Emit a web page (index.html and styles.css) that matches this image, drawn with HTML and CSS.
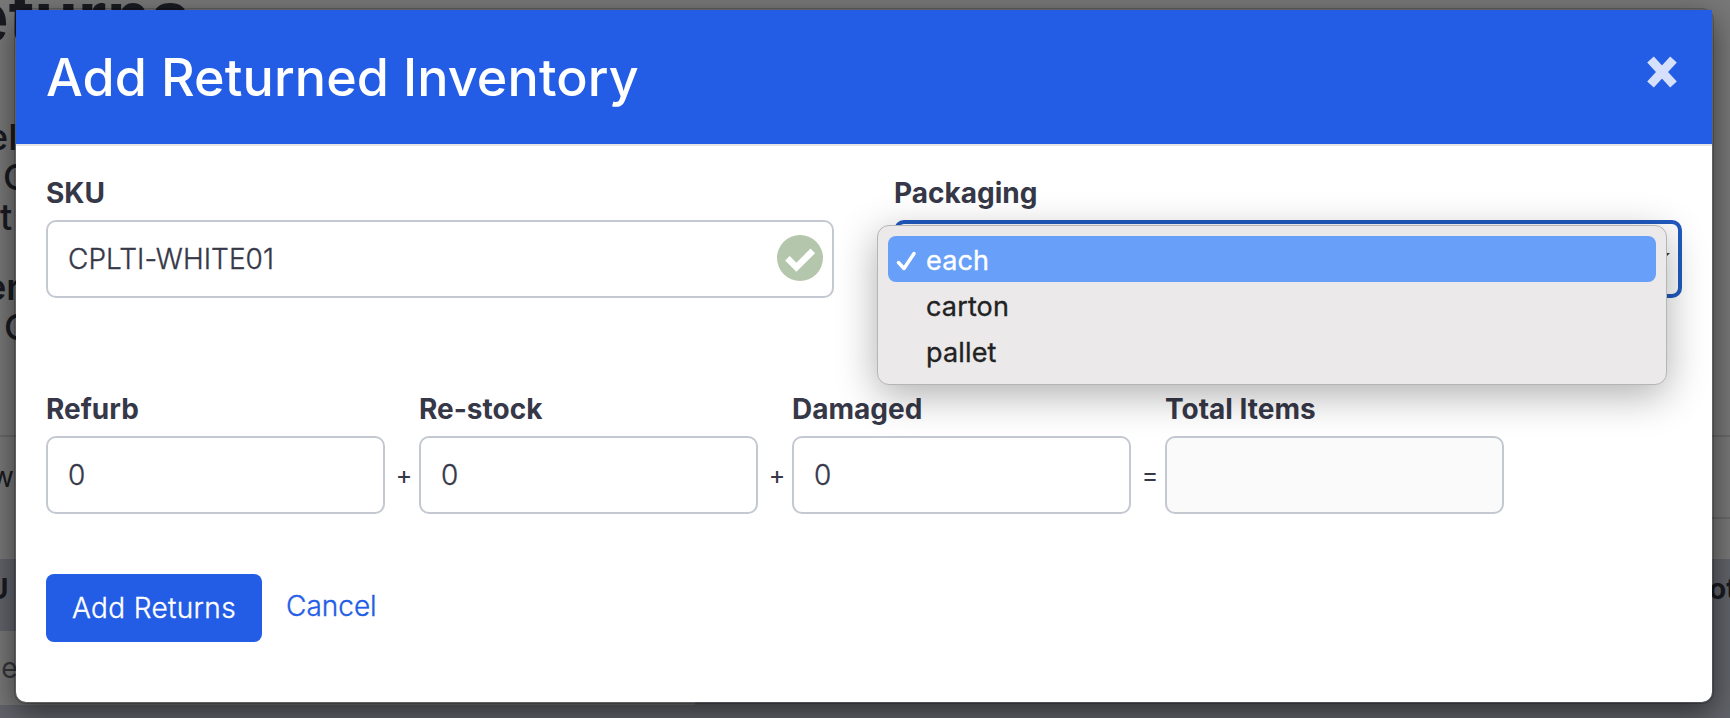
FILE: index.html
```
<!DOCTYPE html>
<html lang="en">

<head>
  <meta charset="UTF-8">
  <meta name="viewport" content="width=device-width, initial-scale=1.0">
  <title>Add Returned Inventory</title>
  <link rel="stylesheet" href="styles.css">
</head>

<body>

  <!-- page behind the modal -->
  <div class="page">
    <h1 class="page-title">eturns</h1>
    <div class="details">
      <p class="line-el">el</p>
      <p class="line-c">C</p>
      <p class="line-t">t</p>
      <p class="line-er">er</p>
      <p class="line-c2">C</p>
    </div>
    <div class="filters"><span>w</span><i></i></div>
    <div class="table-head"><span class="head-left">U</span><span class="head-right">ot</span></div>
    <div class="table-row"><span>be</span></div>
    <div class="tabs"></div>
  </div>

  <div class="modal">
    <div class="modal-header">
      <h2>Add Returned Inventory</h2>
      <button class="close" type="button" aria-label="Close">
        <svg width="32" height="34" viewBox="0 0 32 34">
          <path d="M4.5 4.5L27.5 29.5M27.5 4.5L4.5 29.5" />
        </svg>
      </button>
    </div>

    <form class="modal-body">
      <div class="row">
        <div class="field">
          <label>SKU</label>
          <div class="input">
            <span>CPLTI-WHITE01</span>
            <svg class="valid" width="46" height="46" viewBox="0 0 46 46">
              <circle cx="23" cy="23" r="23" />
              <path d="M10.4 23.2L19.4 32.2L35.8 15.9" />
            </svg>
          </div>
        </div>
        <div class="field">
          <label>Packaging</label>
          <div class="input select">
            <i class="caret"></i>
            <ul class="menu">
              <li class="active">
                <svg width="20" height="20" viewBox="0 0 20 20">
                  <path d="M2.5 11.5L8 17.5L18 2.5" />
                </svg>
                each
              </li>
              <li>carton</li>
              <li>pallet</li>
            </ul>
          </div>
        </div>
      </div>

      <div class="row counts">
        <div class="field">
          <label>Refurb</label>
          <div class="input">0</div>
        </div>
        <span class="sign">+</span>
        <div class="field">
          <label>Re-stock</label>
          <div class="input">0</div>
        </div>
        <span class="sign">+</span>
        <div class="field">
          <label>Damaged</label>
          <div class="input">0</div>
        </div>
        <span class="sign">=</span>
        <div class="field">
          <label>Total Items</label>
          <div class="input disabled"></div>
        </div>
      </div>

      <div class="actions">
        <button class="btn" type="button">Add Returns</button>
        <a class="cancel">Cancel</a>
      </div>
    </form>
  </div>

</body>

</html>
```
FILE: styles.css
```
* {
  margin: 0;
  padding: 0;
  box-sizing: border-box;
}

body {
  width: 1730px;
  height: 718px;
  overflow: hidden;
  position: relative;
  font-family: Inter, "Liberation Sans", sans-serif;
  font-size: 28px;
  color: #363848;
}

ul {
  list-style: none;
}

/* page behind the modal */
.page {
  height: 718px;
  overflow: hidden;
  background-color: #777877;
  color: #191b21;
  white-space: nowrap;
}

.page-title {
  height: 117px;
  margin-left: -33px;
  font-size: 70px;
  font-weight: 700;
  line-height: 34px;
}

.details {
  height: 318px;
  font-size: 36px;
  font-weight: 500;
  line-height: 40px;
}

.line-el {
  margin-left: -13px;
}

.line-c {
  margin-left: 3px;
}

.line-er {
  margin: 30px 0 0 -15px;
  font-weight: 600;
}

.line-c2 {
  margin-left: 4px;
}

.filters {
  height: 124px;
  display: flex;
  border-top: 2px solid #686968;
}

.filters span {
  width: 28px;
  height: 81px;
  margin-left: -9px;
  line-height: 81px;
}

.filters i {
  flex: 1;
  height: 82px;
  border-bottom: 2px solid #686968;
}

.table-head {
  height: 72px;
  display: flex;
  justify-content: space-between;
  background-color: #62646b;
  font-weight: 700;
  line-height: 60px;
}

.head-left {
  margin-left: -12px;
}

.head-right {
  width: 21px;
}

.table-row {
  height: 74px;
  background: linear-gradient(to right, #777877 695px, #62646b 695px);
  color: #34353a;
  line-height: 74px;
}

.table-row span {
  margin-left: -16px;
}

.tabs {
  height: 13px;
  background-color: #62646b;
}

/* modal */
.modal {
  position: absolute;
  left: 14px;
  top: 8px;
  width: 1700px;
  height: 696px;
  border: 2px solid rgba(0, 0, 0, .2);
  border-radius: 12px;
  background-color: #fff;
  background-clip: padding-box;
  box-shadow: 0 10px 30px rgba(0, 0, 0, .5);
}

.modal-header {
  height: 136px;
  padding: 0 34px 0 30px;
  display: flex;
  justify-content: space-between;
  border-bottom: 2px solid #e5e5e5;
  background-color: #235de6;
}

.modal-header h2 {
  color: #fff;
  font-size: 52px;
  font-weight: 500;
  letter-spacing: .1px;
  line-height: 136px;
}

.close {
  height: 34px;
  margin-top: 45px;
  border: 0;
  background: none;
}

.close svg,
.valid {
  display: block;
}

.close path {
  fill: none;
  stroke: #d6e0fa;
  stroke-width: 9;
}

.modal-body {
  padding: 28px 30px 0;
}

.row {
  height: 216px;
  display: flex;
  gap: 60px;
}

.field {
  width: 788px;
}

label {
  display: block;
  height: 46px;
  font-weight: 700;
  letter-spacing: 0;
  line-height: 39px;
}

.input {
  height: 78px;
  padding: 0 9px 0 20px;
  display: flex;
  align-items: center;
  justify-content: space-between;
  border: 2px solid #c4c8d0;
  border-radius: 10px;
  background-color: #fff;
  font-weight: 300;
  letter-spacing: .05px;
  -webkit-text-stroke: .35px;
}

.valid {
  margin-top: -2px;
}

.valid circle {
  fill: #b4c6ab;
}

.valid path {
  fill: none;
  stroke: #fff;
  stroke-width: 6.5;
}

.select {
  position: relative;
  border: 4px solid #205bc0;
}

.caret {
  position: absolute;
  right: 8px;
  top: 29px;
  border: 7px solid transparent;
  border-top-color: #333;
}

/* dropdown lies over the select */
.menu {
  position: absolute;
  left: -21px;
  top: 1px;
  width: 790px;
  height: 160px;
  padding: 10px;
  border: 1px solid #b5b4b6;
  border-radius: 12px;
  background-color: #ebe9ea;
  box-shadow: 0 10px 40px rgba(0, 0, 0, .32);
  color: #222;
  font-weight: 400;
  font-size: 27px;
  letter-spacing: .15px;
}

.menu li {
  height: 46px;
  padding-left: 38px;
  border-radius: 8px;
  line-height: 49px;
}

.menu .active {
  position: relative;
  background-color: #679ff9;
  color: #fff;
}

.menu svg {
  position: absolute;
  left: 8px;
  top: 15px;
}

.menu path {
  fill: none;
  stroke: #fff;
  stroke-width: 3.5;
  stroke-linecap: round;
  stroke-linejoin: round;
}

/* amounts */
.counts {
  height: 184px;
  gap: 0;
}

.counts .field {
  width: 339px;
}

.sign {
  width: 34px;
  padding: 46px 0 0 4px;
  font-size: 25px;
  line-height: 78px;
  text-align: center;
}

.counts .disabled {
  background-color: #fafafa;
}

.actions {
  display: flex;
  gap: 24px;
}

.btn {
  width: 216px;
  height: 68px;
  border: 0;
  border-radius: 8px;
  background-color: #235de6;
  color: #fff;
  font-family: inherit;
  font-size: 28px;
  font-weight: 300;
  letter-spacing: .35px;
  -webkit-text-stroke: .35px;
}

.cancel {
  color: #235de6;
  font-weight: 300;
  line-height: 65px;
  -webkit-text-stroke: .35px;
}
```
